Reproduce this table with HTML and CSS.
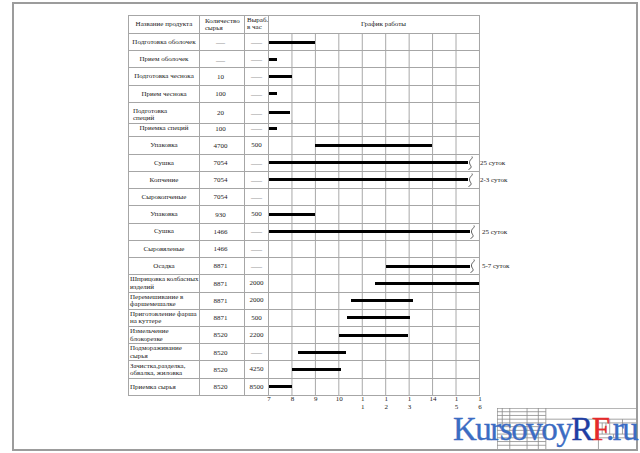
FILE: index.html
```html
<!DOCTYPE html>
<html lang="ru">
<head>
<meta charset="utf-8">
<title>График работы</title>
<link rel="stylesheet" href="styles.css">
</head>
<body>
<div class="sheet">
  <div class="schedule">
    <div class="row head">
      <div class="cell name">Название продукта</div>
      <div class="cell qty-h">Количество<br>сырья</div>
      <div class="cell rate-h">Выраб.<br>в час</div>
      <div class="cell chart-h">График работы</div>
      <div class="note"></div>
    </div>
    <div class="row">
      <div class="cell name">Подготовка оболочек</div>
      <div class="cell qty"><span class="dash">—</span></div>
      <div class="cell rate"><span class="dash">—</span></div>
      <div class="cell chart"><span class="bar" style="margin-left:0;width:46px"></span></div>
      <div class="note"></div>
    </div>
    <div class="row">
      <div class="cell name">Прием оболочек</div>
      <div class="cell qty"><span class="dash">—</span></div>
      <div class="cell rate"><span class="dash">—</span></div>
      <div class="cell chart"><span class="bar" style="margin-left:0;width:8px"></span></div>
      <div class="note"></div>
    </div>
    <div class="row">
      <div class="cell name">Подготовка чеснока</div>
      <div class="cell qty">10</div>
      <div class="cell rate"><span class="dash">—</span></div>
      <div class="cell chart"><span class="bar" style="margin-left:0;width:23px"></span></div>
      <div class="note"></div>
    </div>
    <div class="row">
      <div class="cell name">Прием чеснока</div>
      <div class="cell qty">100</div>
      <div class="cell rate"><span class="dash">—</span></div>
      <div class="cell chart"><span class="bar" style="margin-left:0;width:8px"></span></div>
      <div class="note"></div>
    </div>
    <div class="row">
      <div class="cell name spice">Подготовка<br>специй</div>
      <div class="cell qty">20</div>
      <div class="cell rate"><span class="dash">—</span></div>
      <div class="cell chart"><span class="bar" style="margin-left:0;width:21px"></span></div>
      <div class="note"></div>
    </div>
    <div class="row">
      <div class="cell name">Приемка специй</div>
      <div class="cell qty">100</div>
      <div class="cell rate"><span class="dash">—</span></div>
      <div class="cell chart"><span class="bar" style="margin-left:0;width:8px"></span></div>
      <div class="note"></div>
    </div>
    <div class="row">
      <div class="cell name">Упаковка</div>
      <div class="cell qty">4700</div>
      <div class="cell rate">500</div>
      <div class="cell chart"><span class="bar" style="margin-left:46px;width:117px"></span></div>
      <div class="note"></div>
    </div>
    <div class="row">
      <div class="cell name">Сушка</div>
      <div class="cell qty">7054</div>
      <div class="cell rate"><span class="dash">—</span></div>
      <div class="cell chart"><span class="bar" style="margin-left:0;width:199px"></span><svg class="brk" viewBox="0 0 8 14"><path d="M6 0.5 C7.5 2.5 3 3.5 3.5 7 C4 10 7.5 11 2.5 13.5"/></svg></div>
      <div class="note">25 суток</div>
    </div>
    <div class="row">
      <div class="cell name">Копчение</div>
      <div class="cell qty">7054</div>
      <div class="cell rate"><span class="dash">—</span></div>
      <div class="cell chart"><span class="bar" style="margin-left:0;width:199px"></span><svg class="brk" viewBox="0 0 8 14"><path d="M6 0.5 C7.5 2.5 3 3.5 3.5 7 C4 10 7.5 11 2.5 13.5"/></svg></div>
      <div class="note">2-3 суток</div>
    </div>
    <div class="row">
      <div class="cell name">Сырокопченые</div>
      <div class="cell qty">7054</div>
      <div class="cell rate"><span class="dash">—</span></div>
      <div class="cell chart"></div>
      <div class="note"></div>
    </div>
    <div class="row">
      <div class="cell name">Упаковка</div>
      <div class="cell qty">930</div>
      <div class="cell rate">500</div>
      <div class="cell chart"><span class="bar" style="margin-left:0;width:46px"></span></div>
      <div class="note"></div>
    </div>
    <div class="row">
      <div class="cell name">Сушка</div>
      <div class="cell qty">1466</div>
      <div class="cell rate"><span class="dash">—</span></div>
      <div class="cell chart"><span class="bar" style="margin-left:0;width:201px"></span><svg class="brk" viewBox="0 0 8 14"><path d="M6 0.5 C7.5 2.5 3 3.5 3.5 7 C4 10 7.5 11 2.5 13.5"/></svg></div>
      <div class="note shift">25 суток</div>
    </div>
    <div class="row">
      <div class="cell name">Сыровяленые</div>
      <div class="cell qty">1466</div>
      <div class="cell rate"><span class="dash">—</span></div>
      <div class="cell chart"></div>
      <div class="note"></div>
    </div>
    <div class="row">
      <div class="cell name">Осадка</div>
      <div class="cell qty">8871</div>
      <div class="cell rate"><span class="dash">—</span></div>
      <div class="cell chart"><span class="bar" style="margin-left:117px;width:84px"></span><svg class="brk" viewBox="0 0 8 14"><path d="M6 0.5 C7.5 2.5 3 3.5 3.5 7 C4 10 7.5 11 2.5 13.5"/></svg></div>
      <div class="note shift">5-7 суток</div>
    </div>
    <div class="row">
      <div class="cell name left">Шприцовка колбасных<br>изделий</div>
      <div class="cell qty">8871</div>
      <div class="cell rate">2000</div>
      <div class="cell chart"><span class="bar" style="margin-left:106px;width:104px"></span></div>
      <div class="note"></div>
    </div>
    <div class="row">
      <div class="cell name left">Перемешивание в<br>фаршемешалке</div>
      <div class="cell qty">8871</div>
      <div class="cell rate">2000</div>
      <div class="cell chart"><span class="bar" style="margin-left:82px;width:62px"></span></div>
      <div class="note"></div>
    </div>
    <div class="row">
      <div class="cell name left">Приготовление фарша<br>на куттере</div>
      <div class="cell qty">8871</div>
      <div class="cell rate">500</div>
      <div class="cell chart"><span class="bar" style="margin-left:78px;width:63px"></span></div>
      <div class="note"></div>
    </div>
    <div class="row">
      <div class="cell name left">Измельчение<br>блокорезке</div>
      <div class="cell qty">8520</div>
      <div class="cell rate">2200</div>
      <div class="cell chart"><span class="bar" style="margin-left:70px;width:69px"></span></div>
      <div class="note"></div>
    </div>
    <div class="row">
      <div class="cell name left">Подмораживание<br>сырья</div>
      <div class="cell qty">8520</div>
      <div class="cell rate"><span class="dash">—</span></div>
      <div class="cell chart"><span class="bar" style="margin-left:29px;width:48px"></span></div>
      <div class="note"></div>
    </div>
    <div class="row">
      <div class="cell name left">Зачистка,разделка,<br>обвалка, жиловка</div>
      <div class="cell qty">8520</div>
      <div class="cell rate">4250</div>
      <div class="cell chart"><span class="bar" style="margin-left:23px;width:49px"></span></div>
      <div class="note"></div>
    </div>
    <div class="row">
      <div class="cell name left">Приемка сырья</div>
      <div class="cell qty">8520</div>
      <div class="cell rate">8500</div>
      <div class="cell chart"><span class="bar" style="margin-left:0;width:23px"></span></div>
      <div class="note"></div>
    </div>
    <div class="axis">
      <span class="tick">7</span>
      <span class="tick">8</span>
      <span class="tick">9</span>
      <span class="tick">10</span>
      <span class="tick">1<br>1</span>
      <span class="tick">1<br>2</span>
      <span class="tick">1<br>3</span>
      <span class="tick">14</span>
      <span class="tick">1<br>5</span>
      <span class="tick">1<br>6</span>
    </div>
  </div>
  <svg class="stamp" viewBox="0 0 185 55" preserveAspectRatio="none">
    <path d="M0 0.4 H185 M0.4 0 V55
             M7 0 V25 M17 0 V55 M40 0 V55 M55 0 V55 M65 0 V55
             M0 5 H65 M0 10 H65 M0 15 H65 M0 20 H65 M0 25 H65 M0 30 H65 M0 35 H65 M0 40 H65 M0 45 H65 M0 50 H65
             M65 15 H185 M135 15 V55
             M135 20 H185 M135 35 H185 M135 40 H185
             M140 20 V35 M145 20 V35 M150 15 V35 M167 15 V35 M155 35 V40"/>
  </svg>
</div>
<div class="logo">Kursovoy<span class="r">R</span><span class="f">F</span>.ru</div>
</body>
</html>
```
FILE: styles.css
```css
* { box-sizing: border-box; }

html, body {
  margin: 0;
  background: #fff;
}

body {
  position: relative;
  width: 640px;
  height: 453px;
  overflow: hidden;
  padding: 2px 0 0 12px;
  font-family: "Liberation Serif", "DejaVu Serif", serif;
  color: #222;
}

.sheet {
  position: relative;
  width: 626px;
  height: 449px;
  border: 2px solid #9c9c9c;
}

.schedule {
  margin: 11px 0 0 114px;
  font-size: 7px;
  line-height: 7.5px;
}

.row {
  display: grid;
  grid-template-columns: 72px 45px 24px 211px 70px;
  height: 17.238px;
}

.row.head { height: 19px; }

.cell {
  display: flex;
  align-items: center;
  justify-content: center;
  text-align: center;
  white-space: nowrap;
  padding-top: 1px;
  border-right: 1px solid #a6a6a6;
  border-bottom: 1px solid #a6a6a6;
}

.cell:first-child { border-left: 1px solid #a6a6a6; }
.head .cell { border-top: 1px solid #a6a6a6; }

.name.left {
  justify-content: flex-start;
  text-align: left;
  padding-left: 1px;
}

.name.spice {
  justify-content: flex-start;
  align-items: flex-start;
  text-align: left;
  padding: 5px 0 0 4px;
}

.qty { padding-right: 3px; padding-top: 2px; }

.qty-h {
  justify-content: flex-start;
  text-align: left;
  padding-left: 5px;
}

.rate-h {
  justify-content: flex-start;
  align-items: flex-start;
  text-align: left;
  padding: 1px 0 0 2px;
  line-height: 6.5px;
}

.chart-h {
  justify-content: flex-start;
  padding-left: 92px;
}

.dash {
  color: #9a9a9a;
  font-size: 9px;
}

.rate .dash { font-size: 11px; }

.chart {
  justify-content: flex-start;
  padding-top: 0;
  background-image: linear-gradient(to right, transparent calc(100% - 1px), #a6a6a6 0);
  background-size: 23.444px 100%;
  background-repeat: repeat-x;
}

.bar {
  display: block;
  flex: none;
  height: 3px;
  background: #000;
}

.brk {
  flex: none;
  width: 8px;
  height: 14px;
  margin-left: -2px;
  fill: none;
  stroke: #333;
  stroke-width: 0.8;
}

.note {
  display: flex;
  align-items: center;
  white-space: nowrap;
  padding-top: 1px;
}

.note.shift { padding-left: 2px; }

.axis {
  display: flex;
  margin: -1px 0 0 129.28px;
  line-height: 8px;
}

.tick {
  flex: none;
  width: 23.444px;
  text-align: center;
}

.stamp {
  position: absolute;
  right: 0;
  bottom: 0;
  width: 139px;
  height: 41px;
  fill: none;
  stroke: #8c8c8c;
  stroke-width: 0.8;
}

.stamp path { vector-effect: non-scaling-stroke; }

.logo {
  position: absolute;
  left: 453px;
  top: 413px;
  font-family: "Liberation Serif", "DejaVu Serif", serif;
  font-size: 33px;
  line-height: 33px;
  letter-spacing: -1.5px;
  white-space: nowrap;
  color: #3b6cc3;
  -webkit-text-stroke: 0.35px currentColor;
}

.logo .r { color: #1f3ea3; }
.logo .f { color: #e52a2b; }
```
